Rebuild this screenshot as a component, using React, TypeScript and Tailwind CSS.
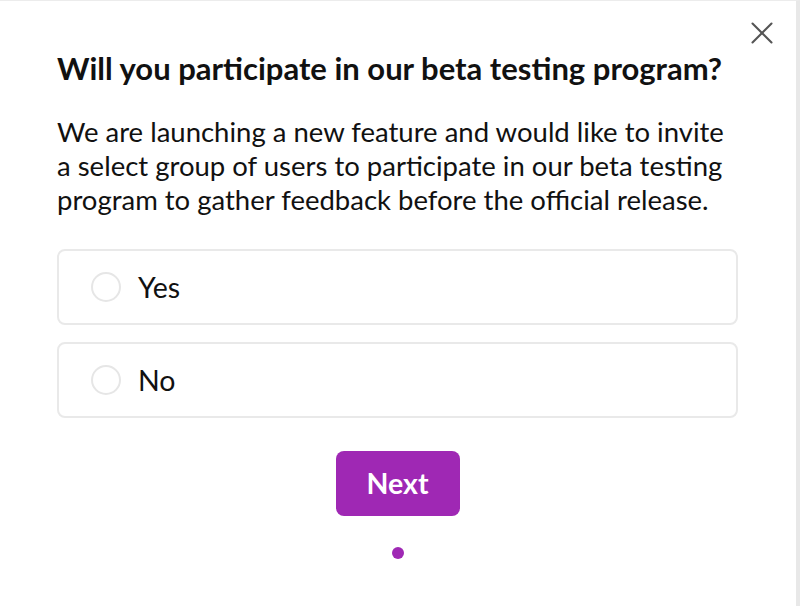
import { X } from "lucide-react";

const options = ["Yes", "No"];

export default function App() {
  return (
    <div
      className="relative h-[606px] w-full overflow-hidden border-t border-r-4 border-t-[#ececec] border-r-[#e8e8e8] bg-white text-[#111]"
      style={{ fontFamily: "Lato, 'Open Sans', sans-serif" }}
    >
      {/* Close */}
      <button
        className="absolute right-[15px] top-[13px] flex h-[38px] w-[38px] items-center justify-center text-[#555]"
        aria-label="Close"
      >
        <X size={38} strokeWidth={1.3} />
      </button>

      <div className="pl-[57px] pr-[58px] pt-[48px]">
        <h2 className="text-[31px] font-bold leading-[38px]">
          Will you participate in our beta testing program?
        </h2>
        <p className="mt-[28px] text-[27.5px] leading-[34px]">
          We are launching a new feature and would like to invite a select group of users to
          participate in our beta testing program to gather feedback before the official release.
        </p>

        {/* Options */}
        <div className="mt-[32px] flex flex-col gap-[17px]">
          {options.map((o) => (
            <label
              key={o}
              className="flex h-[76px] items-center gap-[17px] rounded-[8px] border-2 border-[#e9e9e9] pl-[32px]"
            >
              <span className="h-[30px] w-[30px] rounded-full border-2 border-[#e6e6e6]" />
              <span className="text-[28.5px]">{o}</span>
            </label>
          ))}
        </div>

        {/* Next */}
        <div className="mt-[33px] flex flex-col items-center">
          <button className="h-[65px] w-[124px] rounded-[8px] bg-[#9f28b4] text-[28.5px] font-bold text-white">
            Next
          </button>
          <span className="mt-[31px] h-[12px] w-[12px] rounded-full bg-[#9f28b4]" />
        </div>
      </div>
    </div>
  );
}
